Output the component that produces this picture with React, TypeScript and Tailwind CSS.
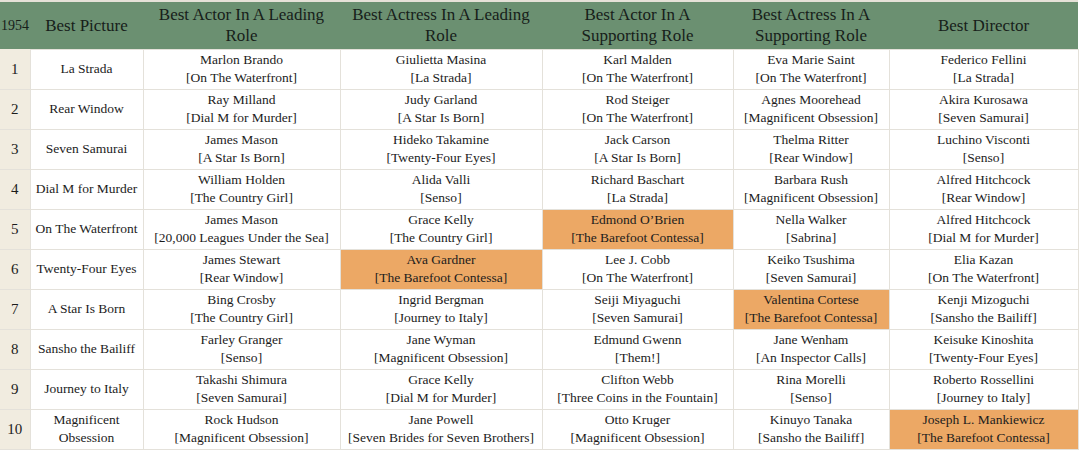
const HEADERS: React.ReactNode[] = [
  "Best Picture",
  <>Best Actor In A Leading<br />Role</>,
  <>Best Actress In A Leading<br />Role</>,
  <>Best Actor In A<br />Supporting Role</>,
  <>Best Actress In A<br />Supporting Role</>,
  "Best Director",
];

type Cell = [string, string, boolean?];

type Row = {
  picture: string;
  cells: Cell[];
};

const ROWS: Row[] = [
  {
    picture: "La Strada",
    cells: [
      ["Marlon Brando", "On The Waterfront"],
      ["Giulietta Masina", "La Strada"],
      ["Karl Malden", "On The Waterfront"],
      ["Eva Marie Saint", "On The Waterfront"],
      ["Federico Fellini", "La Strada"],
    ],
  },
  {
    picture: "Rear Window",
    cells: [
      ["Ray Milland", "Dial M for Murder"],
      ["Judy Garland", "A Star Is Born"],
      ["Rod Steiger", "On The Waterfront"],
      ["Agnes Moorehead", "Magnificent Obsession"],
      ["Akira Kurosawa", "Seven Samurai"],
    ],
  },
  {
    picture: "Seven Samurai",
    cells: [
      ["James Mason", "A Star Is Born"],
      ["Hideko Takamine", "Twenty-Four Eyes"],
      ["Jack Carson", "A Star Is Born"],
      ["Thelma Ritter", "Rear Window"],
      ["Luchino Visconti", "Senso"],
    ],
  },
  {
    picture: "Dial M for Murder",
    cells: [
      ["William Holden", "The Country Girl"],
      ["Alida Valli", "Senso"],
      ["Richard Baschart", "La Strada"],
      ["Barbara Rush", "Magnificent Obsession"],
      ["Alfred Hitchcock", "Rear Window"],
    ],
  },
  {
    picture: "On The Waterfront",
    cells: [
      ["James Mason", "20,000 Leagues Under the Sea"],
      ["Grace Kelly", "The Country Girl"],
      ["Edmond O’Brien", "The Barefoot Contessa", true],
      ["Nella Walker", "Sabrina"],
      ["Alfred Hitchcock", "Dial M for Murder"],
    ],
  },
  {
    picture: "Twenty-Four Eyes",
    cells: [
      ["James Stewart", "Rear Window"],
      ["Ava Gardner", "The Barefoot Contessa", true],
      ["Lee J. Cobb", "On The Waterfront"],
      ["Keiko Tsushima", "Seven Samurai"],
      ["Elia Kazan", "On The Waterfront"],
    ],
  },
  {
    picture: "A Star Is Born",
    cells: [
      ["Bing Crosby", "The Country Girl"],
      ["Ingrid Bergman", "Journey to Italy"],
      ["Seiji Miyaguchi", "Seven Samurai"],
      ["Valentina Cortese", "The Barefoot Contessa", true],
      ["Kenji Mizoguchi", "Sansho the Bailiff"],
    ],
  },
  {
    picture: "Sansho the Bailiff",
    cells: [
      ["Farley Granger", "Senso"],
      ["Jane Wyman", "Magnificent Obsession"],
      ["Edmund Gwenn", "Them!"],
      ["Jane Wenham", "An Inspector Calls"],
      ["Keisuke Kinoshita", "Twenty-Four Eyes"],
    ],
  },
  {
    picture: "Journey to Italy",
    cells: [
      ["Takashi Shimura", "Seven Samurai"],
      ["Grace Kelly", "Dial M for Murder"],
      ["Clifton Webb", "Three Coins in the Fountain"],
      ["Rina Morelli", "Senso"],
      ["Roberto Rossellini", "Journey to Italy"],
    ],
  },
  {
    picture: "Magnificent Obsession",
    cells: [
      ["Rock Hudson", "Magnificent Obsession"],
      ["Jane Powell", "Seven Brides for Seven Brothers"],
      ["Otto Kruger", "Magnificent Obsession"],
      ["Kinuyo Tanaka", "Sansho the Bailiff"],
      ["Joseph L. Mankiewicz", "The Barefoot Contessa", true],
    ],
  },
];

export default function App() {
  return (
    <div className="w-[1080px] h-[452px] bg-white overflow-hidden font-[family-name:Liberation_Serif,serif] text-[#1c1c1c]">
      <table className="w-[1078px] table-fixed border-collapse border-t-2 border-[#e6e2d8]">
        <colgroup>
          <col className="w-[30px]" />
          <col className="w-[113px]" />
          <col className="w-[197px]" />
          <col className="w-[202px]" />
          <col className="w-[191px]" />
          <col className="w-[156px]" />
          <col className="w-[189px]" />
        </colgroup>
        <thead>
          <tr className="h-[48px] bg-[#6b9071] text-[#17201a]">
            <th className="p-0 text-[14px] font-normal text-center">1954</th>
            {HEADERS.map((h, i) => (
              <th key={i} className="px-1 py-0 text-[17px] leading-[21px] font-normal text-center">
                {h}
              </th>
            ))}
          </tr>
        </thead>
        <tbody>
          {ROWS.map((row, i) => (
            <tr key={i} className="h-[40px]">
              <td className="p-0 bg-[#f1ece0] text-[15px] text-center border-b border-[#e4e1da]">
                {i + 1}
              </td>
              <td className="px-1 py-0 text-[13.5px] leading-[18px] text-center border border-[#e4e1da]">
                {row.picture}
              </td>
              {row.cells.map(([name, film, won], j) => (
                <td
                  key={j}
                  className={
                    "px-1 py-0 text-[13.5px] leading-[18px] text-center border border-[#e4e1da] whitespace-nowrap " +
                    (won ? "bg-[#eca865]" : "")
                  }
                >
                  {name}
                  <br />[{film}]
                </td>
              ))}
            </tr>
          ))}
        </tbody>
      </table>
    </div>
  );
}
